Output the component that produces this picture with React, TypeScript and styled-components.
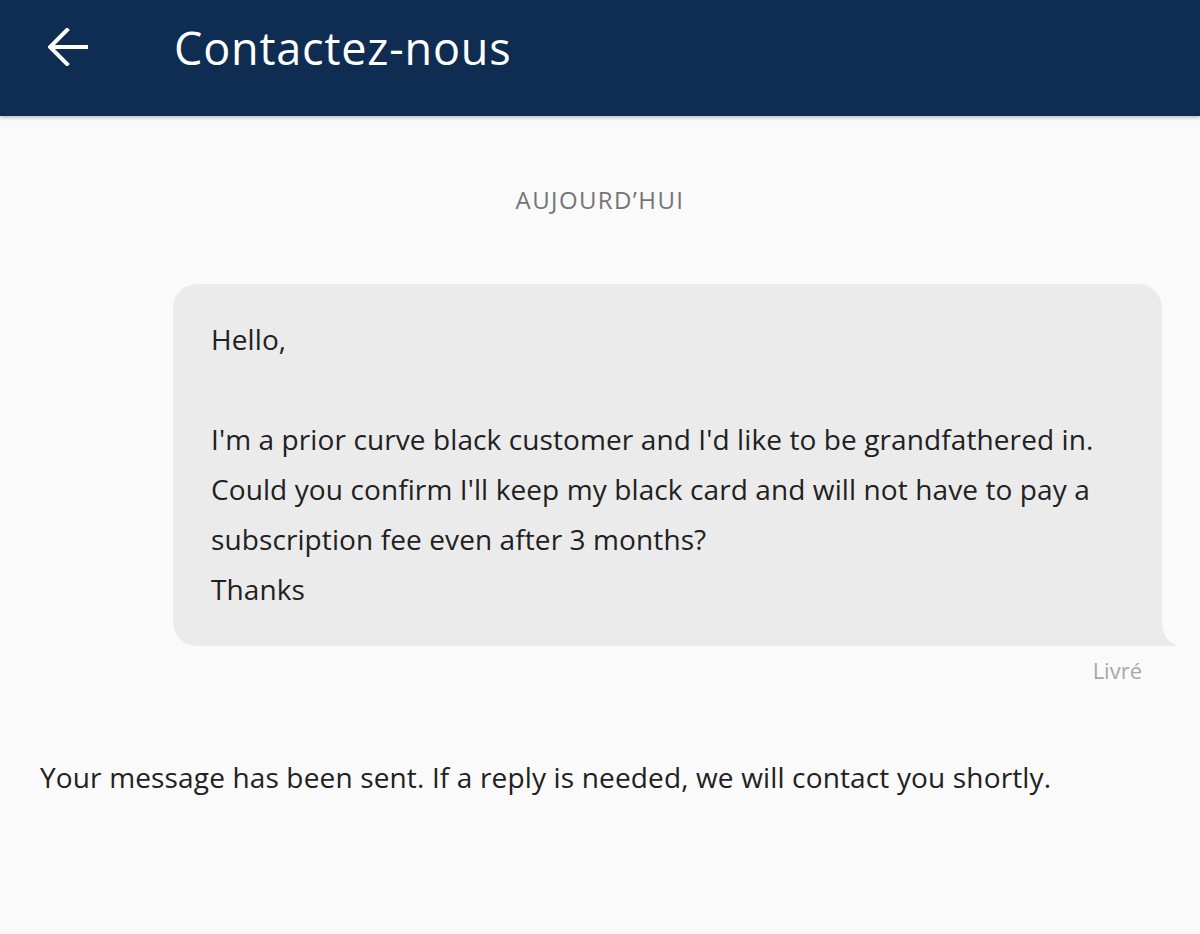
import React from "react";
import styled, { createGlobalStyle } from "styled-components";

const Global = createGlobalStyle`
  html, body { margin: 0; padding: 0; background: #fafafa; }
  body { font-family: "Open Sans", "Noto Sans", sans-serif; }
`;

const Page = styled.div`
  min-height: 934px;
  background: #fafafa;
  display: flex;
  flex-direction: column;
`;

const Header = styled.header`
  height: 116px;
  background: #0f2d52;
  display: flex;
  align-items: center;
  padding: 0 0 22px 48px;
  box-sizing: border-box;
  gap: 86px;
  box-shadow: 0 2px 3px rgba(0, 0, 0, 0.22);
  position: relative;
  z-index: 1;
`;

const BackButton = styled.button`
  width: 40px;
  height: 40px;
  padding: 0;
  border: 0;
  background: transparent;
  display: flex;
  align-items: center;
  justify-content: center;
`;

const Title = styled.h1`
  margin: 0;
  color: #ffffff;
  font-family: "Open Sans", sans-serif;
  font-weight: 400;
  font-size: 45px;
  letter-spacing: 0.8px;
`;

const Thread = styled.main`
  display: flex;
  flex-direction: column;
  padding: 70px 0 0;
`;

const DayLabel = styled.div`
  text-align: center;
  color: #757575;
  font-size: 24px;
  letter-spacing: 1.4px;
  line-height: 28px;
`;

const BubbleRow = styled.div`
  display: flex;
  justify-content: flex-end;
  padding: 70px 38px 0 173px;
`;

const Bubble = styled.div`
  position: relative;
  flex: 1;
  background: #ebebeb;
  border-radius: 24px 24px 0 24px;
  padding: 30px 30px 32px 38px;
  color: #212121;
  font-size: 28px;
  line-height: 50px;
  letter-spacing: 0.1px;
  white-space: pre-line;
`;

const Tail = styled.svg`
  position: absolute;
  right: -19px;
  bottom: 0;
  width: 20px;
  height: 46px;
`;

const Status = styled.div`
  align-self: flex-end;
  padding: 10px 58px 0 0;
  color: #a8a8a8;
  font-size: 22px;
  line-height: 28px;
`;

const Notice = styled.p`
  margin: 73px 0 0 40px;
  color: #212121;
  font-size: 28px;
  line-height: 40px;
  letter-spacing: 0.15px;
`;

export default function App() {
  return (
    <Page>
      <Global />
      <Header>
        <BackButton aria-label="Retour">
          <svg width="40" height="38" viewBox="0 0 40 38" fill="none">
            <path
              d="M38 19H3M19 2L2 19l17 17"
              stroke="#fff"
              strokeWidth="4"
              strokeLinecap="square"
              strokeLinejoin="miter"
            />
          </svg>
        </BackButton>
        <Title>Contactez-nous</Title>
      </Header>
      <Thread>
        <DayLabel>AUJOURD’HUI</DayLabel>
        <BubbleRow>
          <Bubble>
            {"Hello,\n\nI'm a prior curve black customer and I'd like to be grandfathered in.\nCould you confirm I'll keep my black card and will not have to pay a subscription fee even after 3 months?\nThanks"}
            <Tail viewBox="0 0 20 46">
              <path d="M0 0 L1 0 L1 18 Q1 44 20 46 L0 46 Z" fill="#ebebeb" />
            </Tail>
          </Bubble>
        </BubbleRow>
        <Status>Livré</Status>
        <Notice>Your message has been sent. If a reply is needed, we will contact you shortly.</Notice>
      </Thread>
    </Page>
  );
}
